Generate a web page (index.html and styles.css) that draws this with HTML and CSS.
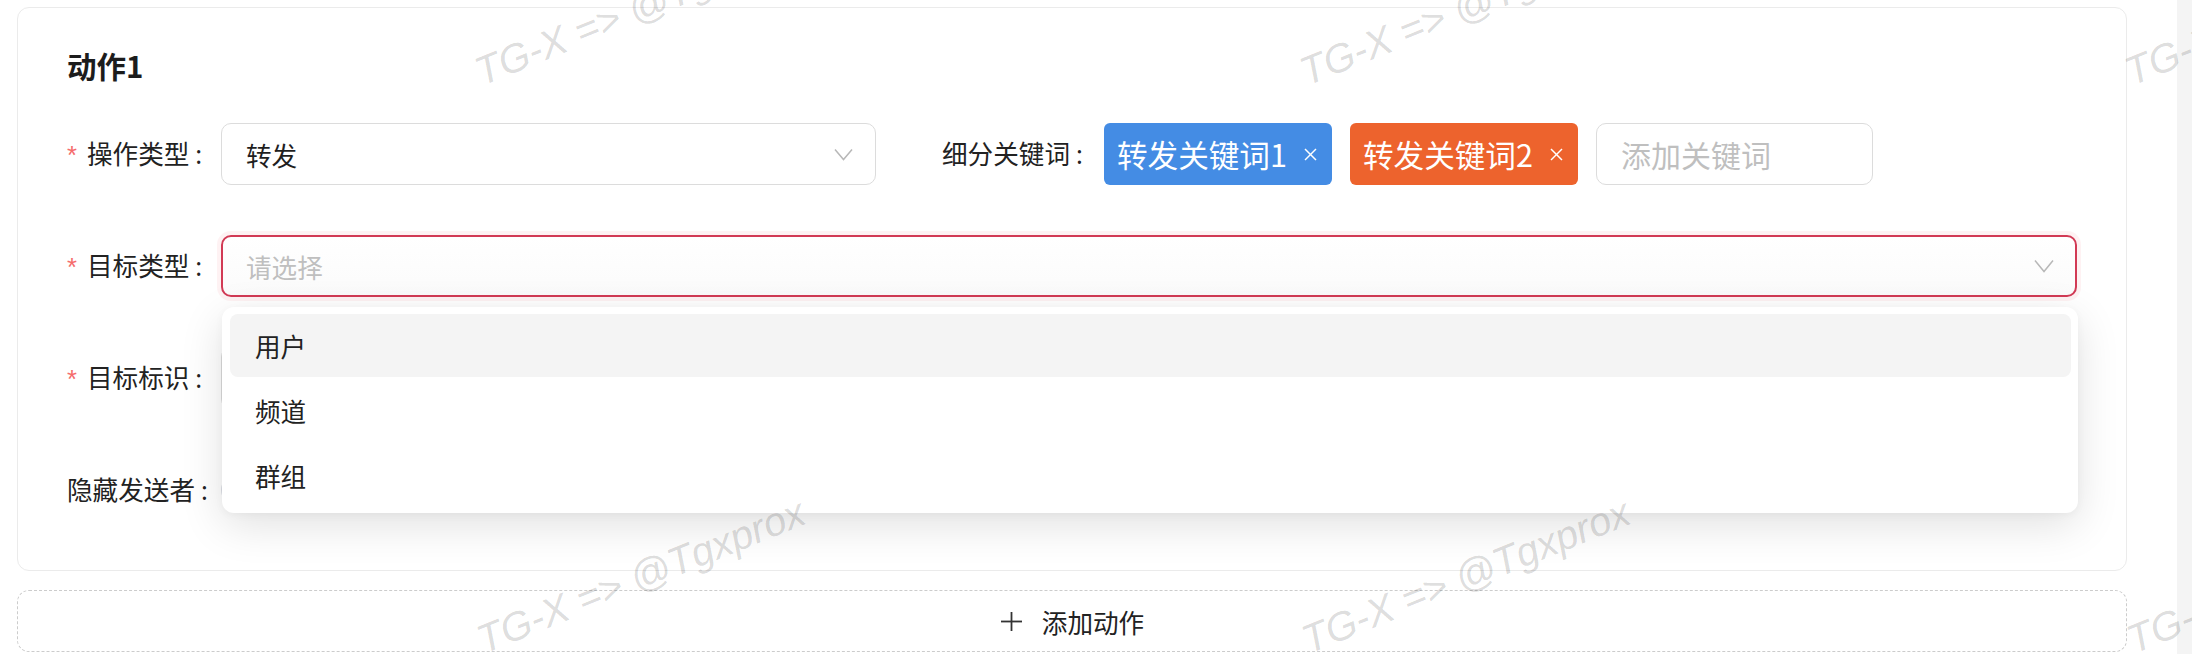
FILE: index.html
```html
<!DOCTYPE html>
<html lang="zh-CN">
<head>
<meta charset="utf-8">
<title>动作设置</title>
<link rel="stylesheet" href="styles.css">
</head>
<body>
<div class="page">
  <main class="main">
    <section class="card">
      <h2 class="card-title">动作1</h2>

      <div class="form-row">
        <div class="form-item item-type">
          <label class="label"><span class="req">*</span>操作类型<span class="colon">:</span></label>
          <div class="select select-fill">
            <span class="select-value">转发</span>
            <svg class="chevron" viewBox="0 0 19 13"><polyline points="1,1.5 9.5,11.5 18,1.5"/></svg>
          </div>
        </div>
        <div class="form-item item-keywords">
          <label class="label label-keywords">细分关键词<span class="colon">:</span></label>
          <div class="tags">
            <span class="tag tag-blue">转发关键词1<svg class="tag-close" viewBox="0 0 13 13"><line x1="1" y1="1" x2="12" y2="12"/><line x1="12" y1="1" x2="1" y2="12"/></svg></span>
            <span class="tag tag-orange">转发关键词2<svg class="tag-close" viewBox="0 0 13 13"><line x1="1" y1="1" x2="12" y2="12"/><line x1="12" y1="1" x2="1" y2="12"/></svg></span>
            <div class="tag-input"><span class="placeholder">添加关键词</span></div>
          </div>
        </div>
      </div>

      <div class="form-row">
        <div class="form-item item-full">
          <label class="label"><span class="req">*</span>目标类型<span class="colon">:</span></label>
          <div class="select select-error">
            <span class="placeholder">请选择</span>
            <svg class="chevron chevron-lg" viewBox="0 0 20 14"><polyline points="1,1.5 10,12.5 19,1.5"/></svg>
            <div class="dropdown">
              <div class="option active">用户</div>
              <div class="option">频道</div>
              <div class="option">群组</div>
            </div>
          </div>
        </div>
      </div>

      <div class="form-row">
        <div class="form-item item-full">
          <label class="label"><span class="req">*</span>目标标识<span class="colon">:</span></label>
          <div class="select input-box"></div>
        </div>
      </div>

      <div class="form-row">
        <div class="form-item item-full">
          <label class="label">隐藏发送者<span class="colon">:</span></label>
          <span class="switch"><span class="knob"></span></span>
        </div>
      </div>
    </section>

    <div class="add-btn">
      <svg class="plus" viewBox="0 0 23 21"><line x1="11.5" y1="1" x2="11.5" y2="20"/><line x1="1" y1="10.5" x2="22" y2="10.5"/></svg>
      <span>添加动作</span>
    </div>
  </main>
  <div class="scrollbar"></div>

  <svg class="watermark" width="2192" height="654" viewBox="0 0 2192 654">
    <text x="482" y="86" transform="rotate(-22 482 86)">TG-X =&gt; @Tgxprox</text>
    <text x="1307" y="86" transform="rotate(-22 1307 86)">TG-X =&gt; @Tgxprox</text>
    <text x="2132" y="86" transform="rotate(-22 2132 86)">TG-X =&gt; @Tgxprox</text>
    <text x="484" y="654" transform="rotate(-22 484 654)">TG-X =&gt; @Tgxprox</text>
    <text x="1309" y="654" transform="rotate(-22 1309 654)">TG-X =&gt; @Tgxprox</text>
    <text x="2134" y="654" transform="rotate(-22 2134 654)">TG-X =&gt; @Tgxprox</text>
  </svg>
</div>
</body>
</html>
```

FILE: styles.css
```css
* { box-sizing: border-box; }

html, body {
  margin: 0;
  padding: 0;
  height: 100%;
}

body {
  font-family: "Noto Sans CJK SC", "Noto Sans", sans-serif;
  color: #222222;
  background: #ffffff;
  overflow: hidden;
}

.page {
  position: relative;
  display: flex;
  height: 654px;
}

.main {
  flex: 1;
  padding: 7px 50px 0 17px;
}

.scrollbar {
  width: 15px;
  background: #f4f4f4;
}

.card {
  border: 1px solid #ebebeb;
  border-radius: 12px;
  padding: 37px 49px 49px;
}

.card-title {
  margin: 0 0 38px;
  font-size: 29.5px;
  font-weight: 700;
  line-height: 40px;
  color: #1c1c1c;
}

.form-row {
  display: flex;
  align-items: center;
  height: 62px;
  margin-bottom: 50px;
}

.form-row:last-child {
  margin-bottom: 0;
}

.form-item {
  display: flex;
  align-items: center;
  height: 100%;
}

.item-type {
  width: 809px;
  margin-right: 66px;
}

.item-full {
  flex: 1;
}

.label {
  width: 154px;
  flex-shrink: 0;
  font-size: 25.6px;
  line-height: 36px;
  white-space: nowrap;
  color: #222222;
}

.label-keywords {
  width: 162px;
}

.colon {
  font-family: "Noto Sans", "Liberation Sans", sans-serif;
  margin-left: 6px;
}

.req {
  font-family: "Liberation Sans", Arial, sans-serif;
  color: #f56c6c;
  margin-right: 10px;
}

.select {
  display: flex;
  align-items: center;
  justify-content: space-between;
  height: 62px;
  border: 1px solid #dcdcdc;
  border-radius: 10px;
  padding: 0 22px 0 24px;
  background: #ffffff;
  font-size: 25.6px;
}

.select-fill {
  flex: 1;
}

.select-value {
  color: #1f1f1f;
}

.select-error {
  position: relative;
  flex: 1;
  border: 2px solid #d23a55;
  padding: 0 21px 0 23px;
  box-shadow: 0 0 0 4px rgba(236, 84, 107, 0.08);
  background: linear-gradient(#ffffff, #fbfbfb);
}

.input-box {
  flex: 1;
}

.placeholder {
  color: #bfbfbf;
}

.chevron {
  width: 19px;
  height: 13px;
  fill: none;
  stroke: #b8b8b8;
  stroke-width: 1.5;
}

.chevron-lg {
  width: 20px;
  height: 14px;
}

.tags {
  display: flex;
  align-items: center;
  gap: 18px;
}

.tag {
  display: inline-flex;
  align-items: center;
  height: 62px;
  padding: 0 15px 0 13px;
  border-radius: 6px;
  color: #ffffff;
  font-size: 30.6px;
}

.tag-blue {
  background: #448ce4;
}

.tag-orange {
  background: #ed632d;
}

.tag-close {
  width: 13px;
  height: 13px;
  margin-left: 17px;
  stroke: #ffffff;
  stroke-width: 1.5;
}

.tag-input {
  display: flex;
  align-items: center;
  width: 277px;
  height: 62px;
  border: 1px solid #dcdcdc;
  border-radius: 10px;
  padding-left: 24px;
  font-size: 30px;
}

.dropdown {
  position: absolute;
  top: calc(100% + 12px);
  left: -1px;
  right: -3px;
  display: flex;
  flex-direction: column;
  gap: 2px;
  padding: 7px 7px 6px 8px;
  background: #ffffff;
  border-radius: 12px;
  box-shadow: 0 12px 44px rgba(0, 0, 0, 0.12), 0 2px 8px rgba(0, 0, 0, 0.04);
  z-index: 10;
}

.option {
  display: flex;
  align-items: center;
  height: 63px;
  padding-left: 25px;
  border-radius: 8px;
  font-size: 25.6px;
  color: #222222;
}

.option.active {
  background: #f4f4f4;
}

.switch {
  position: relative;
  display: inline-block;
  width: 64px;
  height: 34px;
  border-radius: 17px;
  background: #dcdfe6;
}

.knob {
  position: absolute;
  top: 3px;
  left: 3px;
  width: 28px;
  height: 28px;
  border-radius: 50%;
  background: #ffffff;
}

.add-btn {
  display: flex;
  align-items: center;
  justify-content: center;
  gap: 19px;
  margin-top: 19px;
  height: 62px;
  border: 1px dashed #cccccc;
  border-radius: 12px;
  font-size: 25.6px;
  color: #222222;
}

.plus {
  width: 23px;
  height: 21px;
  stroke: #333333;
  stroke-width: 1.8;
}

.watermark {
  position: absolute;
  left: 0;
  top: 0;
  pointer-events: none;
  z-index: 20;
}

.watermark text {
  font-family: "Liberation Sans", Arial, sans-serif;
  font-style: italic;
  font-size: 40px;
  fill: #000000;
  fill-opacity: 0.15;
}
```
